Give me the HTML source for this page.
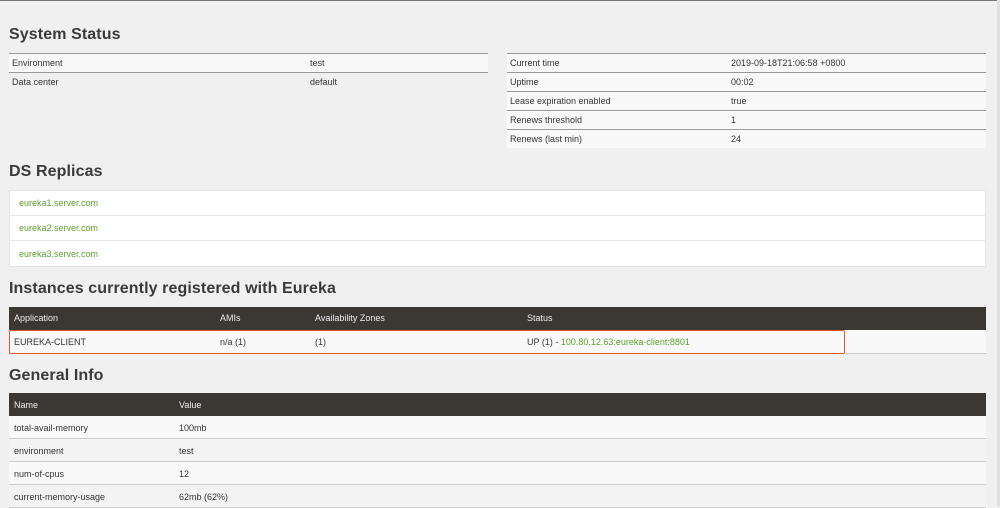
<!DOCTYPE html>
<html><head><meta charset="utf-8"><style>
*{margin:0;padding:0;box-sizing:border-box}
body{width:1000px;height:507px;overflow:hidden;background:#f0f0f0;font-family:"Liberation Sans",sans-serif;color:#333;position:relative;font-size:9px}
.a{position:absolute}
h2{position:absolute;left:9px;font-size:16px;font-weight:bold;color:#3a3a3a;letter-spacing:0.1px}
.t{position:absolute}
.r{height:19px;border-top:1.5px solid #999;position:relative}
.r span{position:absolute;top:4px}
.l{background:#f9f9f9}
.g{color:#5ea32e}
.dh{background:#3b3733;color:#eee;position:absolute}
.dh span,.row span{position:absolute}
.row{position:absolute;background:#f9f9f9;border-bottom:1px solid #ccc}
</style></head><body>
<div class="a" style="left:0;top:0;width:1000px;height:1px;background:#777"></div>
<div class="a" style="left:997px;top:0;width:3px;height:507px;background:#e0e0e0"></div>
<h2 style="top:26px">System Status</h2>
<div class="t" style="left:9px;top:53px;width:479px">
<div class="r l"><span style="left:3px">Environment</span><span style="left:301px">test</span></div>
<div class="r"><span style="left:3px">Data center</span><span style="left:301px">default</span></div>
</div>
<div class="t" style="left:507px;top:53px;width:479px">
<div class="r l"><span style="left:3px">Current time</span><span style="left:224px">2019-09-18T21:06:58 +0800</span></div>
<div class="r l"><span style="left:3px">Uptime</span><span style="left:224px">00:02</span></div>
<div class="r l"><span style="left:3px">Lease expiration enabled</span><span style="left:224px">true</span></div>
<div class="r l"><span style="left:3px">Renews threshold</span><span style="left:224px">1</span></div>
<div class="r l"><span style="left:3px">Renews (last min)</span><span style="left:224px">24</span></div>
</div>
<h2 style="top:163px">DS Replicas</h2>
<div class="a" style="left:9px;top:190px;width:977px;height:77px;background:#fff;border:1px solid #e4e4e4"></div>
<div class="a" style="left:9px;top:215px;width:977px;height:1px;background:#e8e8e8"></div>
<div class="a" style="left:9px;top:240px;width:977px;height:1px;background:#e8e8e8"></div>
<div class="a g" style="left:19px;top:198px">eureka1.server.com</div>
<div class="a g" style="left:19px;top:223px">eureka2.server.com</div>
<div class="a g" style="left:19px;top:249px">eureka3.server.com</div>
<h2 style="top:280px">Instances currently registered with Eureka</h2>
<div class="dh" style="left:9px;top:307px;width:977px;height:23px"><span style="left:5px;top:6px">Application</span><span style="left:211px;top:6px">AMIs</span><span style="left:306px;top:6px">Availability Zones</span><span style="left:518px;top:6px">Status</span></div>
<div class="row" style="left:9px;top:330px;width:977px;height:24px"><span style="left:5px;top:7px">EUREKA-CLIENT</span><span style="left:211px;top:7px">n/a (1)</span><span style="left:306px;top:7px">(1)</span><span style="left:518px;top:7px">UP (1) - <span class="g" style="position:static">100.80.12.63:eureka-client:8801</span></span></div>
<div class="a" style="left:9px;top:330px;width:836px;height:24px;border:1.5px solid #e3562e;border-radius:2px"></div>
<h2 style="top:367px">General Info</h2>
<div class="dh" style="left:9px;top:393px;width:977px;height:23px"><span style="left:5px;top:7px">Name</span><span style="left:170px;top:7px">Value</span></div>
<div class="row" style="left:9px;top:416px;width:977px;height:23px"><span style="left:5px;top:7px">total-avail-memory</span><span style="left:170px;top:7px">100mb</span></div>
<div class="row" style="left:9px;top:439px;width:977px;height:23px;background:#f3f3f3"><span style="left:5px;top:7px">environment</span><span style="left:170px;top:7px">test</span></div>
<div class="row" style="left:9px;top:462px;width:977px;height:23px"><span style="left:5px;top:7px">num-of-cpus</span><span style="left:170px;top:7px">12</span></div>
<div class="row" style="left:9px;top:485px;width:977px;height:23px;background:#f3f3f3"><span style="left:5px;top:7px">current-memory-usage</span><span style="left:170px;top:7px">62mb (62%)</span></div>
</body></html>
